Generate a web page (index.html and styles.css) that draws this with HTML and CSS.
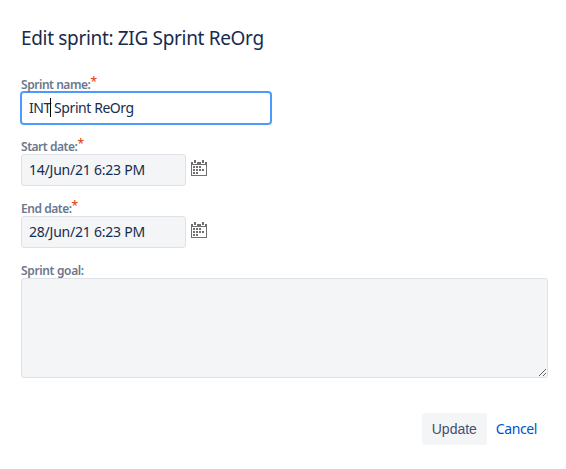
FILE: index.html
```html
<!DOCTYPE html>
<html lang="en">
<head>
    <meta charset="UTF-8">
    <meta name="viewport" content="width=device-width, initial-scale=1.0">
    <title>Edit sprint</title>
    <link rel="stylesheet" href="styles.css">
</head>
<body>

    <form class="dialog">
        <h2 class="title">Edit sprint: ZIG Sprint ReOrg</h2>

        <!-- Fields -->
        <div class="field">
            <label class="label">Sprint name:<span class="required">*</span></label>
            <div class="input name focused"><span class="typed">INT<span class="caret"></span></span> Sprint ReOrg</div>
        </div>

        <div class="field">
            <label class="label" for="start">Start date:<span class="required">*</span></label>
            <div class="date-row">
                <input class="input date" id="start" type="text" value="14/Jun/21 6:23 PM">
                <svg class="calendar" viewBox="0 0 16 16"><path d="M3 0h2v3H3zM11 0h2v3h-2zM0 2h2v2h4V2h4v2h4V2h2v14H0zM1 5v10h14V5zM2 6h2v2H2zM5 6h2v2H5zM8 6h2v2H8zM2 9h2v2H2zM5 9h2v2H5zM8 9h2v2H8zM11 9h2v2h-2zM2 12h2v2H2zM5 12h2v2H5z"/></svg>
            </div>
        </div>

        <div class="field">
            <label class="label" for="end">End date:<span class="required">*</span></label>
            <div class="date-row">
                <input class="input date" id="end" type="text" value="28/Jun/21 6:23 PM">
                <svg class="calendar" viewBox="0 0 16 16"><path d="M3 0h2v3H3zM11 0h2v3h-2zM0 2h2v2h4V2h4v2h4V2h2v14H0zM1 5v10h14V5zM2 6h2v2H2zM5 6h2v2H5zM8 6h2v2H8zM2 9h2v2H2zM5 9h2v2H5zM8 9h2v2H8zM11 9h2v2h-2zM2 12h2v2H2zM5 12h2v2H5z"/></svg>
            </div>
        </div>

        <div class="field goal-field">
            <label class="label goal-label" for="goal">Sprint goal:</label>
            <textarea class="input goal" id="goal"></textarea>
        </div>

        <!-- Buttons -->
        <div class="actions">
            <button class="update" type="button">Update</button>
            <a class="cancel" href="#">Cancel</a>
        </div>
    </form>

</body>
</html>
```
FILE: styles.css
```css
* {
    box-sizing: border-box;
}

body {
    margin: 0;
    background-color: #fff;
    color: #172b4d;
    font-family: "Segoe UI", "Noto Sans", sans-serif;
    font-size: 14px;
}

.dialog {
    padding: 24px 18px 0 21px;
}

.title {
    height: 28px;
    margin: 0 0 26px;
    font-size: 19px;
    font-weight: 400;
    line-height: 28px;
    letter-spacing: -0.33px;
    white-space: nowrap;
}

/* Fields */
.field {
    height: 62px;
}

.label {
    display: flex;
    height: 14px;
    color: #6b778c;
    font-size: 12px;
    font-weight: 600;
    line-height: 14px;
    letter-spacing: -0.46px;
    white-space: nowrap;
}

.goal-label {
    letter-spacing: -0.35px;
}

.required {
    color: #de350b;
    font-size: 12px;
    font-weight: 400;
    line-height: 7px;
}

.input {
    display: block;
    height: 32px;
    margin: 0;
    padding: 0 7px;
    border: 1px solid #dfe1e6;
    border-radius: 3px;
    background-color: #f4f5f7;
    color: #172b4d;
    font-family: inherit;
    font-size: 14px;
    line-height: 30px;
}

.name {
    width: 250px;
    letter-spacing: -0.43px;
    white-space: pre;
}

.focused {
    border-color: #4c9aff;
    background-color: #fff;
    box-shadow: 0 0 0 1px #4c9aff;
}

.typed {
    position: relative;
}

.caret {
    position: absolute;
    top: 0;
    right: 0;
    width: 1px;
    height: 19px;
    background-color: #000;
}

.date-row {
    display: flex;
    gap: 5px;
}

.date {
    width: 165px;
    padding-bottom: 2px;
    letter-spacing: -0.22px;
}

.calendar {
    width: 16px;
    height: 16px;
    margin-top: 6px;
    fill: #707070;
    fill-rule: evenodd;
    shape-rendering: crispEdges;
}

.goal-field {
    height: 114px;
}

.goal {
    width: 100%;
    height: 100px;
    resize: both;
}

/* Buttons */
.actions {
    display: flex;
    justify-content: flex-end;
    align-items: center;
    gap: 9px;
    margin-top: 35px;
    padding-right: 11px;
}

.update {
    width: 65px;
    height: 32px;
    padding: 0;
    border: none;
    border-radius: 3px;
    background-color: #f4f5f7;
    color: #42526e;
    font-family: "Liberation Sans", Arial, sans-serif;
    font-size: 14px;
}

.cancel {
    padding-bottom: 1px;
    color: #0052cc;
    text-decoration: none;
    letter-spacing: -0.4px;
}
```
